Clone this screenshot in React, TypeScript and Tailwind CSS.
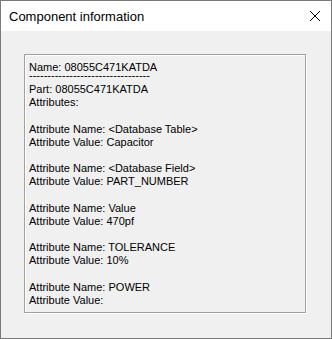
import React from "react";

const groups: [string, string][] = [
  ["<Database Table>", "Capacitor"],
  ["<Database Field>", "PART_NUMBER"],
  ["Value", "470pf"],
  ["TOLERANCE", "10%"],
  ["POWER", ""],
];

export default function App() {
  return (
    <div
      className="w-[332px] h-[339px] border border-[#7a7a7a] bg-[#f0f0f0] flex flex-col"
      style={{ fontFamily: '"Liberation Sans", Arial, sans-serif' }}
    >
      {/* title bar */}
      <div className="h-[30px] bg-white flex items-center justify-between pl-[8px] pr-[9px]">
        <span className="text-[13px] text-black leading-none">Component information</span>
        <svg width="12" height="12" viewBox="0 0 12 12" className="mr-[1px]">
          <path d="M1 1L11 11M11 1L1 11" stroke="#000" strokeWidth="1" fill="none" />
        </svg>
      </div>

      {/* content */}
      <div className="flex-1 pl-[23px] pt-[23px]">
        <div className="w-[282px] h-[259px] border border-[#a0a0a0] shadow-[inset_1px_1px_0_#fff,1px_1px_0_#fff] pl-[4px] pt-[6px] text-[11px] leading-[13px] text-black">
          <div>Name: 08055C471KATDA</div>
          <div className="h-[9px] leading-[3px] whitespace-nowrap">
            ---------------------------------
          </div>
          <div>Part: 08055C471KATDA</div>
          <div>Attributes:</div>
          {groups.map(([name, value]) => (
            <div key={name} className="mt-[13.5px]">
              <div>Attribute Name: {name}</div>
              <div>Attribute Value: {value}</div>
            </div>
          ))}
        </div>
      </div>
    </div>
  );
}
